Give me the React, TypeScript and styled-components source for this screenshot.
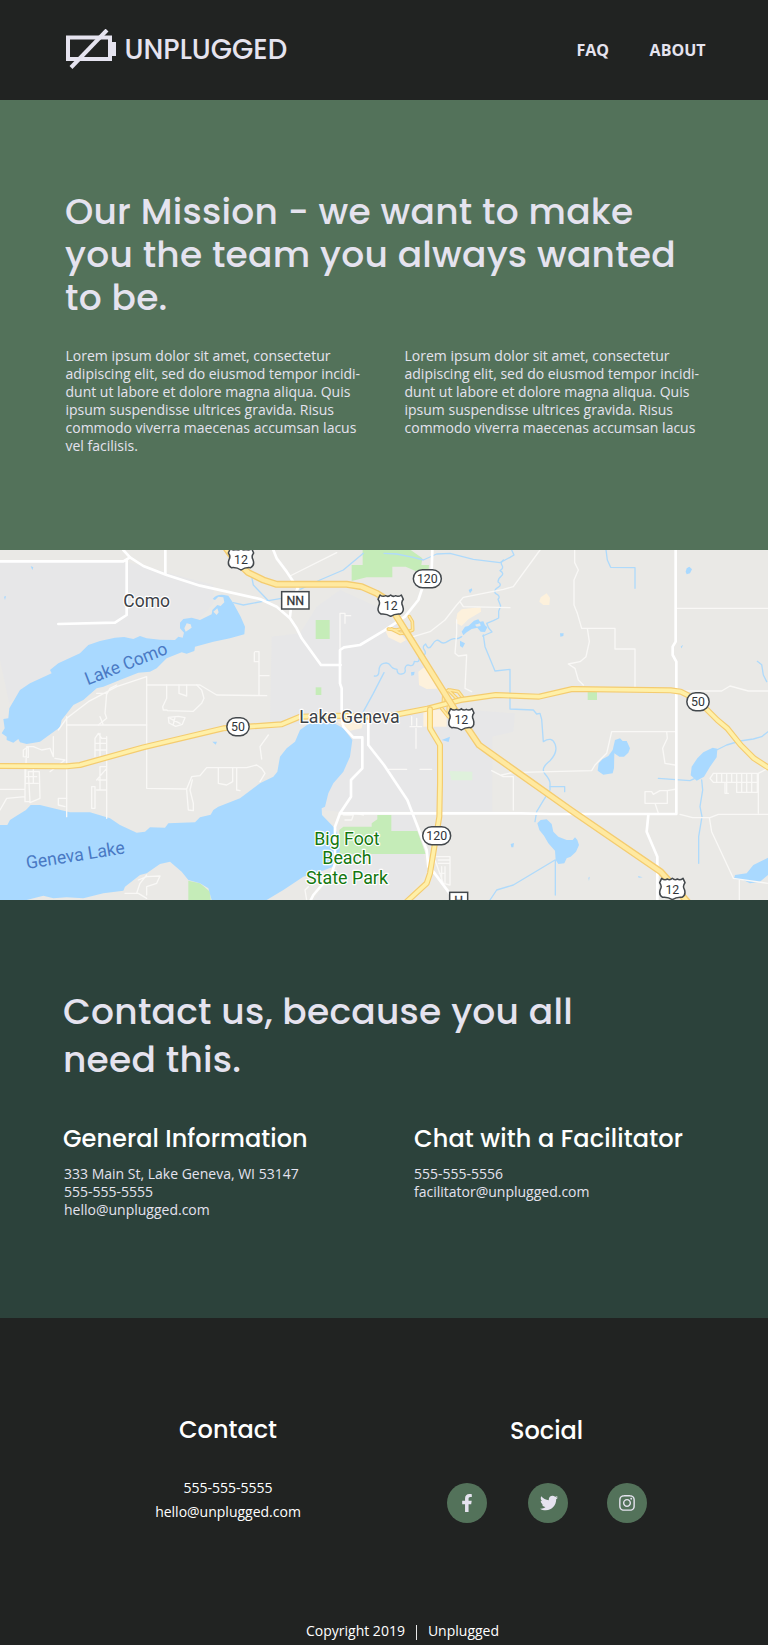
import React from 'react';
import styled, { createGlobalStyle } from 'styled-components';
import { FaFacebookF, FaTwitter, FaInstagram } from 'react-icons/fa';

const GlobalStyle = createGlobalStyle`
  * { box-sizing: border-box; }
  body { margin: 0; background: #212322; font-family: 'Open Sans', sans-serif; }
  h1, h2, h3, p { margin: 0; }
`;

const display = `font-family: Poppins, Inter, sans-serif; font-weight: 500; font-feature-settings: 'cv11' 1;`;

const Page = styled.div`
  width: 768px;
  height: 1645px;
  overflow: hidden;
  display: flex;
  flex-direction: column;
`;

const Header = styled.header`
  height: 100px;
  flex: none;
  background: #212322;
  color: #e5e3ef;
  display: flex;
  align-items: center;
  justify-content: space-between;
  padding: 0 62.5px 0 66px;
`;

const Brand = styled.div`
  display: flex;
  align-items: center;
  gap: 7.5px;
`;

const BrandName = styled.span`
  ${display}
  font-size: 27.5px;
  line-height: 32px;
`;

const Nav = styled.nav`
  display: flex;
  gap: 40.5px;
  font-weight: 700;
  font-size: 16px;
  line-height: 22px;
`;

const Mission = styled.section`
  height: 450px;
  flex: none;
  background: #53725a;
  color: #e5e3ef;
  padding: 90px 65px 0;
`;

const Title = styled.h1<{ $leading: number }>`
  ${display}
  font-size: 36px;
  letter-spacing: 0.25px;
  line-height: ${p => p.$leading}px;
`;

const Line = styled.span`
  display: block;
  white-space: nowrap;
`;

const Columns = styled.div<{ $first: number; $top: number }>`
  display: grid;
  grid-template-columns: ${p => p.$first}px 1fr;
  margin-top: ${p => p.$top}px;
`;

const Copy = styled.p`
  font-size: 14px;
  line-height: 18px;
  padding-left: 0.5px;
`;

const MapFrame = styled.section`
  height: 350px;
  flex: none;
  svg { display: block; }
`;

const Contact = styled.section`
  height: 418px;
  flex: none;
  background: #2c423b;
  color: #e5e3ef;
  padding: 88px 63px 0;
`;

const Subtitle = styled.h2<{ $track?: number }>`
  ${display}
  color: #fff;
  font-size: 24px;
  line-height: 28px;
  white-space: nowrap;
  letter-spacing: ${p => p.$track ?? 0}px;
`;

const ContactCopy = styled(Copy)<{ $inset: number }>`
  margin-top: 12px;
  padding-left: ${p => p.$inset}px;
`;

const Footer = styled.footer`
  height: 327px;
  flex: none;
  background: #212322;
  color: #fff;
  display: flex;
  flex-direction: column;
  padding-top: 98px;
`;

const FooterColumns = styled.div`
  display: grid;
  grid-template-columns: 456px 181px;
  padding-bottom: 97px;
`;

const FooterColumn = styled.div<{ $shift: number }>`
  display: flex;
  flex-direction: column;
  align-items: center;
  padding-top: ${p => p.$shift}px;
`;

const FooterText = styled.p`
  font-size: 14px;
  line-height: 24px;
  text-align: center;
  margin-top: 32px;
`;

const Socials = styled.div`
  display: grid;
  grid-template-columns: 81px 79px 40px;
  margin-top: 38px;
`;

const Social = styled.a<{ $nudge?: number }>`
  width: 40px;
  height: 40px;
  border-radius: 50%;
  background: #53725a;
  color: #e5e3ef;
  display: flex;
  align-items: center;
  justify-content: center;
  padding-left: ${p => p.$nudge ?? 0}px;
`;

const Copyright = styled.div`
  display: flex;
  justify-content: center;
  align-items: center;
  gap: 11px;
  padding-left: 37px;
  font-size: 14px;
  line-height: 20px;
`;

const Divider = styled.span`
  width: 1px;
  height: 15px;
  margin-top: 2px;
  background: #e8e8e8;
`;

const water = [
  // Lake Como
  'M638,147 Q650,132 672,135 L685,137 700,160 722,200 735,230 733,253 690,265 640,275 585,290 583,303 560,311 545,307 500,325 470,355 450,365 415,368 360,390 310,410 290,415 250,450 220,465 185,510 180,532 155,550 120,575 80,582 60,577 55,567 40,578 20,570 20,560 5,550 14,535 10,507 25,505 28,475 60,420 90,400 155,370 150,360 175,340 240,310 265,285 300,273 345,263 372,261 400,267 420,258 440,265 480,269 525,270 535,260 548,263 552,248 540,235 540,218 550,207 575,203 600,210 635,193 637,180 652,165 662,168 673,157 670,142 655,140 645,150Z',
  // Geneva Lake
  'M0,825 L22,825 30,810 50,797 78,780 92,765 120,765 160,775 210,787 270,787 330,805 360,825 410,848 435,845 450,832 495,833 505,820 585,817 600,802 632,794 640,780 655,770 720,745 780,700 820,680 832,665 840,620 860,595 885,575 900,540 925,522 1000,518 1030,535 1057,570 1050,620 1030,665 1000,700 985,730 975,770 965,775 966,795 1000,830 1012,850 1020,900 1010,935 1000,950 960,965 910,980 850,1020 800,1050 635,1050 625,1015 600,1000 565,990 545,965 510,935 480,942 440,970 420,975 375,1010 370,1022 310,1030 250,1045 200,1042 160,1045 130,1037 80,1050 0,1050Z',
  'M1385,245 L1395,230 1405,228 1422,212 1435,208 1440,215 1450,214 1455,226 1462,232 1455,246 1442,245 1432,233 1415,237 1400,247 1390,256Z',
  'M1845,570 L1860,565 1868,573 1880,573 1890,595 1885,608 1872,620 1858,620 1843,610 1842,655 1838,670 1810,674 1793,662 1796,640 1808,627 1825,618 1838,600Z',
  'M2138,593 L2152,596 2150,622 2130,650 2112,680 2090,692 2072,676 2075,650 2092,625 2110,607Z',
  'M1612,820 L1622,810 1640,808 1655,822 1660,845 1675,860 1700,870 1718,870 1725,862 1732,870 1737,885 1728,905 1712,920 1700,925 1693,940 1675,942 1667,930 1665,902 1645,880 1632,857 1618,840Z',
  'M2304,923 L2260,945 2240,970 2205,975 2202,987 2230,990 2250,1000 2280,995 2304,975Z',
  'M2060,55 L2068,50 2076,58 2070,70 2060,73 2057,65Z',
  'M1380,272 L1395,280 1388,293 1380,288Z M1406,120 L1415,115 1417,121 1410,130Z M1680,250 L1691,250 1690,258 1681,260Z M1233,367 L1244,365 1242,375 1234,377Z M2042,290 L2049,284 2045,295Z',
  'M1325,570 L1350,560 1346,576Z M1532,882 L1542,879 1540,892 1534,892Z M1765,983 L1769,980 1767,993Z M1914,978 L1928,982 1916,983Z M637,575 L651,575 647,584Z M92,48 L100,52 97,60Z M12,140 L18,138 15,150Z',
];

const parks = [
  'M947,210H989V267H947Z',
  'M947,412H964V435H947Z',
  'M1088,0H1232L1267,25 1264,45 1287,45 1285,70 1252,65 1217,50 1177,50 1177,82 1100,82 1055,93 1055,45 1088,45Z',
  'M1152,795H1174V843H1252L1277,912 1018,912 1018,840 1030,830H1115V820L1132,808V795Z',
  'M1763,425H1791V450H1763Z',
  'M565,992L600,1000 630,1025 632,1050H565Z',
];

const sand = [
  'M1155,240 L1200,250 1218,270 1202,280 1165,262Z',
  'M1367,218 L1372,190 1385,178 1410,175 1442,172 1443,185 1405,208 1385,228Z',
  'M1622,142 L1640,130 1650,143 1648,165 1630,165 1618,155Z',
  'M1255,365 L1270,353 1290,360 1302,400 1312,416 1280,417 1257,405Z',
  'M1270,480H1340V530H1270Z M1010,515L1090,510 1085,535 1050,542Z',
];

const streams = [
  'M1152,10 L1190,12 1240,22 1270,30 1310,12 1350,10 1420,28 1500,38 1515,30 1530,22 1542,15 1535,0',
  'M1510,30 q-10,8 -4,16 t-6,16 q14,8 4,16 t-10,18 q14,8 0,16 t-8,18 q18,8 8,18 l8,20 -6,16 0,20 -16,8 -20,8 6,14 10,12 -28,12',
  'M1385,260 q-12,8 -20,6 t-22,8 -24,0 -22,10 -20,-2 q-12,8 -4,18 t-4,18 q-14,-4 -12,8 t-14,8 q-2,16 -14,12 t-14,10 q4,14 -10,16 t-14,-14 q-14,-2 -20,-12 t-20,-6 -14,22 -14,16',
  'M1450,255 L1455,290 1485,363 1530,358 1530,477 1600,480 1610,492 1620,490 1625,508 1630,575 Q1655,558 1665,582 T1650,632 Q1620,655 1635,672 T1650,700 L1650,720 1628,755 1610,785 1605,815',
  'M1650,710 H1694V725 M1665,930 L1540,1005 1490,1020 1470,1050 M1666,930V1035',
  'M1818,0 L1822,30 1832,52 1905,53V115',
  'M2272,334 L2285,344 2290,375 2300,395 M1975,685L2070,692 2085,685 M2150,600L2180,585 2220,573 2260,567 2285,560 2304,545 M2105,690L2108,720 2100,770 2106,800 2096,860V940',
  'M755,80 L760,105 805,152 845,145 M700,158L730,165 800,152 M900,118 L960,90 1030,60 1090,10 M1152,368L1120,430 1090,485',
];

const minorRoads = [
  'M175,540 L200,505 265,455 350,410 440,380 V405H600L650,435 800,437 M440,380V715L560,717 M290,430L320,430 315,490 320,505 295,525 M350,405l-20,10-10,18',
  'M500,405V445L488,470 490,480H500L503,482 580,484 605,460 612,445 605,420 590,405 M537,405V430L560,438V405',
  'M765,305H777V335H763V308M777,305V435M777,377H807 M1020,190V295M1020,190H1035V220M1035,197H1052',
  'M505,502l30-3 20,4-8,20-20,6-20-10zM510,505l30,15M525,502l-5,20',
  'M870,78 L1010,8 M200,500V800M200,525H440 M300,500L310,525',
  'M320,560V805M285,565V620M285,565L295,550 305,565H320M300,550V620M285,580H320M285,600H320M300,650V720M300,650H320M275,710V775H285V710ZM290,690L320,655M295,690H320M290,720H320',
  'M0,718H75L80,590 100,590 125,600 150,595 160,620 160,560 M75,655V755H90L85,665H100L118,665 120,745 90,758M75,700H115M100,655V700M80,680H110M0,780L20,745 75,740M70,600V620L85,622V590Z',
  'M165,625L195,630M150,665L195,630M200,745H175V765L195,770M560,717 L575,680 600,677 620,653H740L770,645 785,655 795,670 780,695M560,720 L565,780 580,782 580,760 570,720 577,690M655,653V700L680,705 698,695V655M710,655V720M710,720L720,722',
  'M785,627L780,590 805,555 M1030,795H1060L1055,810H1035 M1070,790 1090,795',
  'M375,1030 L415,1030 440,1045 M415,990 L440,980 480,978 470,1000 440,1010 440,1035 M440,975 420,1000 410,1030 M920,1050 915,1020 925,1010',
  'M1620,0 L1540,110 1510,118 1390,142 1370,165 1335,210 1290,245 1240,260 M1380,155L1390,170 1530,173 M1370,210L1370,250 1365,310 1375,318 1400,315 1395,415 1415,425',
  'M1724,0V38L1735,60 1722,90 1722,165 1732,190 1745,235H1845V297H1905V410M1762,235L1768,275 1758,320 1740,335 1705,342 1725,355 1735,390 1750,405',
  'M2030,175H2304M2040,423H2165L2190,408 2245,423H2304',
  'M2025,545H1835L1820,610 1785,645 1775,662 1560,667 M1475,662L1510,680 1540,680V780 M1540,667L1505,675 M2000,545L2002,565 1988,595 1995,640 2025,645M1935,725H1955L1960,733 1980,722H2002V760H1935ZM2002,722L2030,717M1965,760L1975,790',
  'M2040,793L2078,803H2130L2155,793H2304M2128,803L2135,845 2200,985 2304,1000M2218,990V1050',
  'M2140,670H2272V727H2210M2140,670L2130,685 2140,697H2272M2150,670V697M2165,670V697M2180,670V730M2195,670V697M2210,670V727M2225,670V727M2240,670V727M2255,670V727M2275,670V790M2175,700V730H2185M2275,670L2304,655',
  'M1310,920H1350V1005L1330,1000 1305,930M1315,930H1350M1315,940H1350M1325,950V995M1335,950V1000M1318,970H1335 M1165,658H1220M1260,658H1295M1248,535V595M1230,530H1265M1235,525V500M1250,530V505',
];

const majorRoads = [
  'M370,0 L390,22 430,48 500,75 600,107 780,147 830,170 870,205 890,235 905,265 963,345H1022',
  'M0,34H370L390,22 M380,30V195L345,218 175,222',
  'M496,0V72',
  'M820,0 L830,25 860,65 893,115 875,155 870,200',
  'M1025,500 L1025,415 1020,400V300L1032,292 1080,285 1152,242 1215,200 1255,150 1275,90 1295,60 1297,0',
  'M1025,500 L1030,530 1060,562H1087V655L1053,690V740L1020,790 1005,830V940L995,970 940,1035 930,1055',
  'M1105,500V585L1152,645 1222,750 1280,900 1285,950 1300,965 1360,1045',
  'M1020,790 H1560L1650,792H2029V335L2018,315V290L2027,275V0',
  'M1945,795L1940,845 1972,920V1050',
];

const route50 = 'M0,648 L200,649 240,645 430,592 670,535 845,523 900,500 1020,497 1152,501 1282,476 1382,450 1487,435 1617,440 1717,417 2012,421 2042,425 2092,450 2152,510 2182,535 2222,585 2262,625 2304,652';
const route120 = 'M1290,478V535L1320,585V700L1318,800 1290,970 1280,1000 1220,1055';
const route12 = 'M675,-10 L700,25 745,68 790,90 830,103H1040L1085,110 1130,130 1162,150 1187,195 1212,235 1365,480 1400,530 1437,585 1472,610 1592,695 1712,780 1982,965 2062,1055';
const ramps = 'M1165,237L1190,240 1210,235 M1212,250L1238,240 1237,215 1228,200 M1175,237L1200,250 1225,247 M1330,460L1332,425 1350,420 1375,425 1390,445 M1345,420L1375,450 M1325,475L1345,500 1370,515 M1345,465L1345,490';

type Pin = { x: number; y: number; label: string };

const UsShield = ({ x, y, label }: Pin) => (
  <g transform={`translate(${x} ${y})`}>
    <path
      d="M-32,-33 Q-23,-26 -15,-31 Q-7,-26 0,-33 Q7,-26 15,-31 Q23,-26 32,-33 L38,-20 Q30,-10 36,0 Q42,17 29,24 Q13,22 0,31 Q-13,22 -29,24 Q-42,17 -36,0 Q-30,-10 -38,-20Z"
      fill="#fff" stroke="#43484c" strokeWidth="4.5" strokeLinejoin="round"
    />
    <text y="13" fontSize="37" textAnchor="middle" fill="#303438">{label}</text>
  </g>
);

const StateShield = ({ x, y, label }: Pin) => {
  const w = label.length > 2 ? 84 : 67;
  return (
    <g transform={`translate(${x} ${y})`}>
      <rect x={-w / 2} y="-27" width={w} height="54" rx="27" fill="#fff" stroke="#43484c" strokeWidth="4.5" />
      <text y="13" fontSize="37" textAnchor="middle" fill="#303438">{label}</text>
    </g>
  );
};

const CountyShield = ({ x, y, label, w }: Pin & { w: number }) => (
  <g transform={`translate(${x} ${y})`}>
    <rect x={-w / 2} y="-26" width={w} height="52" fill="#fff" stroke="#43484c" strokeWidth="4.5" />
    <text y="13" fontSize="37" textAnchor="middle" fill="#303438" stroke="#303438" strokeWidth="0.8">{label}</text>
  </g>
);

const Highway = ({ d, wide }: { d: string; wide?: boolean }) => (
  <>
    <path d={d} stroke="#f4cc70" strokeWidth={wide ? 21 : 18} />
    <path d={d} stroke={wide ? '#ffe9a0' : '#fff0a8'} strokeWidth={wide ? 13 : 11} />
  </>
);

const LakeMap = () => (
  <svg width="768" height="350" viewBox="0 0 2304 1050" fontFamily="Roboto, sans-serif">
    <rect width="2304" height="1050" fill="#eae9e6" />
    <g fill="#e7e7e8">
      <path d="M0,35H380L640,105 640,160 540,270 280,290 150,380 60,430 28,460 0,330Z" />
      <path d="M815,260 L900,250 950,170 1020,120 1152,180 1250,300 1340,475 1545,490 1540,545 1477,560V785H1020L960,780 1057,560 900,520 810,525Z" />
      <path d="M1174,795H1250V843H1174Z M1030,912H1270L1280,960 1220,1050H940L1010,960Z" />
    </g>
    <g fill="#c5ecb8">{parks.map(d => <path key={d} d={d} />)}</g>
    <path d="M1348,663L1417,665V691H1354Z" fill="#dff1dc" />
    <g fill="#fdf1dc">{sand.map(d => <path key={d} d={d} />)}</g>
    <g fill="#a9d9ff">{water.map(d => <path key={d} d={d} />)}</g>
    <path d="M553,235L560,220 572,223 575,233 565,240 557,245Z M640,185L652,175 656,187 650,195Z M1425,224L1440,220 1442,228 1430,230Z" fill="#eae9e6" />
    <g fill="none" strokeLinejoin="round" strokeLinecap="round">
      <g stroke="#afdafb" strokeWidth="4">{streams.map(d => <path key={d} d={d} />)}</g>
      <g stroke="#f9f8f6" strokeWidth="4">{minorRoads.map(d => <path key={d} d={d} />)}</g>
      <g stroke="#fff" strokeWidth="8">{majorRoads.map(d => <path key={d} d={d} />)}</g>
      <path d={ramps} stroke="#f4cc70" strokeWidth="11" />
      <path d={ramps} stroke="#ffe9a0" strokeWidth="5" />
      <Highway d={route50} />
      <Highway d={route120} />
      <Highway d={route12} wide />
    </g>
    <UsShield x={723} y={29} label="12" />
    <UsShield x={1172} y={168} label="12" />
    <UsShield x={1384} y={509} label="12" />
    <UsShield x={2017} y={1018} label="12" />
    <StateShield x={714} y={530} label="50" />
    <StateShield x={2094} y={455} label="50" />
    <StateShield x={1282} y={86} label="120" />
    <StateShield x={1310} y={857} label="120" />
    <CountyShield x={886} y={151} w={82} label="NN" />
    <CountyShield x={1376} y={1053} w={54} label="H" />
    <g fontSize="54" stroke="#fff" strokeWidth="7" strokeLinejoin="round" paintOrder="stroke">
      <g fill="#3c4146">
        <text x="370" y="170" textLength="140" lengthAdjust="spacingAndGlyphs">Como</text>
        <text x="898" y="519" textLength="301" lengthAdjust="spacingAndGlyphs">Lake Geneva</text>
      </g>
      <g fill="#14780f">
        <text x="943" y="884" textLength="196" lengthAdjust="spacingAndGlyphs">Big Foot</text>
        <text x="967" y="943" textLength="148" lengthAdjust="spacingAndGlyphs">Beach</text>
        <text x="918" y="1002" textLength="246" lengthAdjust="spacingAndGlyphs">State Park</text>
      </g>
    </g>
    <g fontSize="54" fill="#4a79c4">
      <text transform="translate(263 406) rotate(-21.5)" textLength="261" lengthAdjust="spacingAndGlyphs">Lake Como</text>
      <text transform="translate(81 957) rotate(-9)" textLength="299" lengthAdjust="spacingAndGlyphs">Geneva Lake</text>
    </g>
  </svg>
);

const BatteryLogo = () => (
  <svg width="51" height="42" viewBox="0 0 51 42" fill="none" stroke="#e5e3ef">
    <path d="M2,8.5H44V30H2Z" strokeWidth="4" />
    <path d="M46,13H50V27H46Z" fill="#e5e3ef" stroke="none" />
    <path d="M5,38.5L41,1" strokeWidth="4" />
  </svg>
);

export default function App() {
  return (
    <Page>
      <GlobalStyle />
      <Header>
        <Brand>
          <BatteryLogo />
          <BrandName>UNPLUGGED</BrandName>
        </Brand>
        <Nav>
          <span>FAQ</span>
          <span>ABOUT</span>
        </Nav>
      </Header>
      <Mission>
        <Title $leading={43}>
          <Line>Our Mission - we want to make</Line>
          <Line>you the team you always wanted</Line>
          <Line>to be.</Line>
        </Title>
        <Columns $first={339} $top={28}>
          <Copy>
            <Line>Lorem ipsum dolor sit amet, consectetur</Line>
            <Line>adipiscing elit, sed do eiusmod tempor incidi-</Line>
            <Line>dunt ut labore et dolore magna aliqua. Quis</Line>
            <Line>ipsum suspendisse ultrices gravida. Risus</Line>
            <Line>commodo viverra maecenas accumsan lacus</Line>
            <Line>vel facilisis.</Line>
          </Copy>
          <Copy>
            <Line>Lorem ipsum dolor sit amet, consectetur</Line>
            <Line>adipiscing elit, sed do eiusmod tempor incidi-</Line>
            <Line>dunt ut labore et dolore magna aliqua. Quis</Line>
            <Line>ipsum suspendisse ultrices gravida. Risus</Line>
            <Line>commodo viverra maecenas accumsan lacus</Line>
          </Copy>
        </Columns>
      </Mission>
      <MapFrame>
        <LakeMap />
      </MapFrame>
      <Contact>
        <Title as="h2" $leading={48}>
          <Line>Contact us, because you all</Line>
          <Line>need this.</Line>
        </Title>
        <Columns $first={351} $top={41}>
          <div>
            <Subtitle as="h3" $track={0.06}>General Information</Subtitle>
            <ContactCopy $inset={1}>
              <Line>333 Main St, Lake Geneva, WI 53147</Line>
              <Line>555-555-5555</Line>
              <Line>hello@unplugged.com</Line>
            </ContactCopy>
          </div>
          <div>
            <Subtitle as="h3" $track={0.15}>Chat with a Facilitator</Subtitle>
            <ContactCopy $inset={0}>
              <Line>555-555-5556</Line>
              <Line>facilitator@unplugged.com</Line>
            </ContactCopy>
          </div>
        </Columns>
      </Contact>
      <Footer>
        <FooterColumns>
          <FooterColumn $shift={0}>
            <Subtitle>Contact</Subtitle>
            <FooterText>
              <Line>555-555-5555</Line>
              <Line>hello@unplugged.com</Line>
            </FooterText>
          </FooterColumn>
          <FooterColumn $shift={1}>
            <Subtitle>Social</Subtitle>
            <Socials>
              <Social><FaFacebookF size={18} /></Social>
              <Social $nudge={3}><FaTwitter size={18} /></Social>
              <Social $nudge={1}><FaInstagram size={18} /></Social>
            </Socials>
          </FooterColumn>
        </FooterColumns>
        <Copyright>
          <span>Copyright 2019</span>
          <Divider />
          <span>Unplugged</span>
        </Copyright>
      </Footer>
    </Page>
  );
}
